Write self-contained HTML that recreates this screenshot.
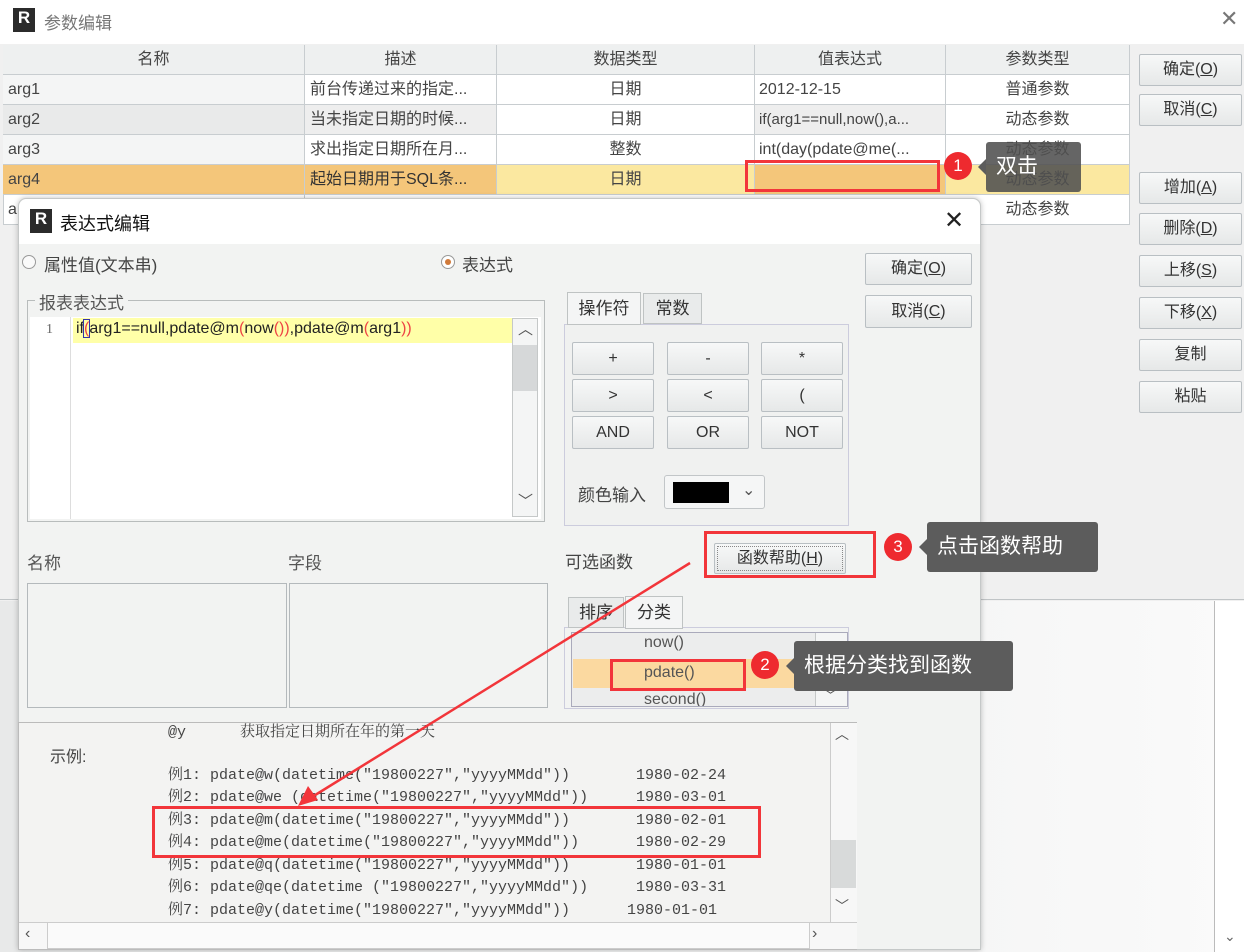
<!DOCTYPE html>
<html><head><meta charset="utf-8">
<style>
*{box-sizing:border-box;margin:0;padding:0}
body{width:1244px;height:952px;position:relative;overflow:hidden;background:#f0f0f0;font-family:"Liberation Sans","Noto Sans CJK SC",sans-serif;font-size:16px;color:#333}
.a{position:absolute}
.btn{position:absolute;background:linear-gradient(#f7f8f8,#e6e8e8);border:1px solid #b9bfc3;border-radius:2px;text-align:center;color:#333;font-size:16px}
.cell{position:absolute;border-right:1px solid #c8cdd0;border-bottom:1px solid #c8cdd0;height:30px;line-height:29px;font-size:16px;color:#444;white-space:nowrap;overflow:hidden}
.rb{position:absolute;border:3px solid #f2353a}
.badge{position:absolute;width:28px;height:28px;border-radius:50%;background:#ee2a2f;color:#fff;text-align:center;line-height:28px;font-size:17px}
.tip{position:absolute;background:#5c5c5c;color:#fff;font-size:21px;border-radius:3px;padding-left:10px}
.tip:before{content:"";position:absolute;left:-8px;top:50%;margin-top:-8px;border:8px solid transparent;border-left:0;border-right-color:#5c5c5c}
.mono{position:absolute;font-family:"Liberation Mono","Noto Serif CJK SC",monospace;font-size:15px;line-height:20px;height:20px;color:#444;white-space:pre}
</style></head><body>
<div class="a" style="left:0;top:0;width:1244px;height:44px;background:#fff"></div>
<div class="a" style="left:13px;top:8px;width:22px;height:24px;background:#2b2b2b;color:#fff;font-weight:bold;font-size:17px;text-align:center;line-height:20px">R</div>
<div class="a" style="left:44px;top:9px;font-size:17px;color:#777">参数编辑</div>
<div class="a" style="left:1220px;top:6px;font-size:22px;color:#777">✕</div>
<div class="a" style="left:0;top:44px;width:1244px;height:556px;background:#f0f0f0;border-bottom:1px solid #c0c4c6"></div>
<div class="a" style="left:0;top:601px;width:1244px;height:351px;background:linear-gradient(90deg,#e8e9e9,#fafafa)"></div>
<div class="a" style="left:1214px;top:601px;width:30px;height:351px;background:#fff;border-left:1px solid #bbb"></div>
<div class="a" style="left:1224px;top:928px;font-size:14px;color:#666">⌄</div>
<div class="a" style="left:3px;top:45px;width:1127px;height:180px;background:#fff;border:1px solid #c8cdd0"></div>
<div class="cell" style="left:3px;top:45px;width:302px;text-align:center;background:#eef0f0">名称</div>
<div class="cell" style="left:305px;top:45px;width:192px;text-align:center;background:#eef0f0">描述</div>
<div class="cell" style="left:497px;top:45px;width:258px;text-align:center;background:#eef0f0">数据类型</div>
<div class="cell" style="left:755px;top:45px;width:191px;text-align:center;background:#eef0f0">值表达式</div>
<div class="cell" style="left:946px;top:45px;width:184px;text-align:center;background:#eef0f0">参数类型</div>
<div class="cell" style="left:3px;top:75px;width:302px;padding-left:5px;background:#f4f5f5">arg1</div>
<div class="cell" style="left:305px;top:75px;width:192px;padding-left:5px">前台传递过来的指定...</div>
<div class="cell" style="left:497px;top:75px;width:258px;text-align:center">日期</div>
<div class="cell" style="left:755px;top:75px;width:191px;padding-left:4px">2012-12-15</div>
<div class="cell" style="left:946px;top:75px;width:184px;text-align:center">普通参数</div>
<div class="cell" style="left:3px;top:105px;width:302px;padding-left:5px;background:#e9eaea">arg2</div>
<div class="cell" style="left:305px;top:105px;width:192px;padding-left:5px;background:#eee">当未指定日期的时候...</div>
<div class="cell" style="left:497px;top:105px;width:258px;text-align:center">日期</div>
<div class="cell" style="left:755px;top:105px;width:191px;padding-left:4px;background:#eee;font-size:15px">if(arg1==null,now(),a...</div>
<div class="cell" style="left:946px;top:105px;width:184px;text-align:center">动态参数</div>
<div class="cell" style="left:3px;top:135px;width:302px;padding-left:5px;background:#f4f5f5">arg3</div>
<div class="cell" style="left:305px;top:135px;width:192px;padding-left:5px">求出指定日期所在月...</div>
<div class="cell" style="left:497px;top:135px;width:258px;text-align:center">整数</div>
<div class="cell" style="left:755px;top:135px;width:191px;padding-left:4px">int(day(pdate@me(...</div>
<div class="cell" style="left:946px;top:135px;width:184px;text-align:center">动态参数</div>
<div class="cell" style="left:3px;top:165px;width:302px;padding-left:5px;background:#f4c67a">arg4</div>
<div class="cell" style="left:305px;top:165px;width:192px;padding-left:5px;background:#f4c67a;color:#333">起始日期用于SQL条...</div>
<div class="cell" style="left:497px;top:165px;width:258px;text-align:center;background:#fbe8a0">日期</div>
<div class="cell" style="left:755px;top:165px;width:191px;background:#f4c67a"></div>
<div class="cell" style="left:946px;top:165px;width:184px;text-align:center;background:#fbe8a0">动态参数</div>
<div class="cell" style="left:3px;top:195px;width:302px;padding-left:5px">a</div>
<div class="cell" style="left:946px;top:195px;width:184px;text-align:center">动态参数</div>
<div class="btn" style="left:1139px;top:54px;width:103px;height:32px;line-height:30px">确定(<u>O</u>)</div>
<div class="btn" style="left:1139px;top:94px;width:103px;height:32px;line-height:30px">取消(<u>C</u>)</div>
<div class="btn" style="left:1139px;top:172px;width:103px;height:32px;line-height:30px">增加(<u>A</u>)</div>
<div class="btn" style="left:1139px;top:213px;width:103px;height:32px;line-height:30px">删除(<u>D</u>)</div>
<div class="btn" style="left:1139px;top:255px;width:103px;height:32px;line-height:30px">上移(<u>S</u>)</div>
<div class="btn" style="left:1139px;top:297px;width:103px;height:32px;line-height:30px">下移(<u>X</u>)</div>
<div class="btn" style="left:1139px;top:339px;width:103px;height:32px;line-height:30px">复制</div>
<div class="btn" style="left:1139px;top:381px;width:103px;height:32px;line-height:30px">粘贴</div>
<div class="rb" style="left:745px;top:160px;width:195px;height:32px"></div>
<div class="badge" style="left:944px;top:152px">1</div>
<div class="tip" style="left:986px;top:142px;width:95px;height:50px;line-height:50px;background:rgba(80,80,80,.88)">双击</div>

<div class="a" style="left:18px;top:198px;width:963px;height:752px;background:#f2f3f2;border:1px solid #c5c8c8;border-radius:8px 8px 0 0;box-shadow:0 0 6px rgba(0,0,0,.25)"></div>
<div class="a" style="left:19px;top:199px;width:961px;height:45px;background:#fff;border-radius:8px 8px 0 0"></div>
<div class="a" style="left:30px;top:209px;width:22px;height:24px;background:#2b2b2b;color:#fff;font-weight:bold;font-size:17px;text-align:center;line-height:20px">R</div>
<div class="a" style="left:60px;top:210px;font-size:18px;color:#111">表达式编辑</div>
<div class="a" style="left:944px;top:206px;font-size:24px;color:#222">✕</div>
<div class="a" style="left:22px;top:255px;width:14px;height:14px;border:1px solid #999;border-radius:50%;background:#fafafa"></div>
<div class="a" style="left:44px;top:251px;font-size:17px;color:#444">属性值(文本串)</div>
<div class="a" style="left:441px;top:255px;width:14px;height:14px;border:1px solid #999;border-radius:50%;background:#fff"><div style="margin:3px;width:6px;height:6px;border-radius:50%;background:#d07a3a"></div></div>
<div class="a" style="left:462px;top:251px;font-size:17px;color:#444">表达式</div>
<div class="btn" style="left:865px;top:253px;width:107px;height:32px;line-height:30px">确定(<u>O</u>)</div>
<div class="btn" style="left:865px;top:295px;width:107px;height:33px;line-height:31px">取消(<u>C</u>)</div>
<div class="a" style="left:27px;top:300px;width:518px;height:222px;border:1px solid #b8bcbc"></div>
<div class="a" style="left:35px;top:289px;background:#f2f3f2;padding:0 4px;font-size:17px;color:#555">报表表达式</div>
<div class="a" style="left:30px;top:317px;width:511px;height:202px;background:#fff"></div>
<div class="a" style="left:70px;top:317px;width:1px;height:202px;background:#ddd"></div>
<div class="a" style="left:46px;top:322px;font-size:14px;color:#666;font-family:'Liberation Serif',serif">1</div>
<div class="a" style="left:73px;top:318px;width:439px;height:25px;background:#ffffa8"></div>
<div class="a" style="left:76px;top:320px;font-size:16px;color:#222;white-space:pre">if<span style="color:#e44;outline:1px solid #33a">(</span>arg1==null,pdate@m<span style="color:#e44">(</span>now<span style="color:#e44">())</span>,pdate@m<span style="color:#e44">(</span>arg1<span style="color:#e44">))</span></div>
<div class="a" style="left:512px;top:318px;width:26px;height:199px;background:#f4f5f5;border:1px solid #c5c8c8"></div>
<div class="a" style="left:513px;top:345px;width:24px;height:46px;background:#d6d8d9"></div>
<div class="a" style="left:518px;top:318px;font-size:15px;color:#555">︿</div>
<div class="a" style="left:518px;top:490px;font-size:15px;color:#555">﹀</div>
<div class="a" style="left:564px;top:324px;width:285px;height:202px;border:1px solid #ccd;background:#f0f1f0"></div>
<div class="a" style="left:567px;top:292px;width:74px;height:33px;border:1px solid #bfc3c3;background:#f4f5f5;font-size:17px;text-align:center;line-height:31px;color:#333">操作符</div>
<div class="a" style="left:643px;top:293px;width:59px;height:31px;border:1px solid #bfc3c3;background:#e9ebeb;font-size:17px;text-align:center;line-height:29px;color:#333">常数</div>
<div class="btn" style="left:572px;top:342px;width:82px;height:33px;line-height:31px">+</div>
<div class="btn" style="left:667px;top:342px;width:82px;height:33px;line-height:31px">-</div>
<div class="btn" style="left:761px;top:342px;width:82px;height:33px;line-height:31px">*</div>
<div class="btn" style="left:572px;top:379px;width:82px;height:33px;line-height:31px">&gt;</div>
<div class="btn" style="left:667px;top:379px;width:82px;height:33px;line-height:31px">&lt;</div>
<div class="btn" style="left:761px;top:379px;width:82px;height:33px;line-height:31px">(</div>
<div class="btn" style="left:572px;top:416px;width:82px;height:33px;line-height:31px">AND</div>
<div class="btn" style="left:667px;top:416px;width:82px;height:33px;line-height:31px">OR</div>
<div class="btn" style="left:761px;top:416px;width:82px;height:33px;line-height:31px">NOT</div>
<div class="a" style="left:578px;top:481px;font-size:17px;color:#444">颜色输入</div>
<div class="a" style="left:664px;top:475px;width:101px;height:34px;border:1px solid #c2c6c8;border-radius:3px;background:#f5f6f6"></div>
<div class="a" style="left:673px;top:482px;width:56px;height:21px;background:#000"></div>
<div class="a" style="left:742px;top:480px;font-size:16px;color:#555">⌄</div>
<div class="a" style="left:565px;top:548px;font-size:17px;color:#444">可选函数</div>
<div class="btn" style="left:714px;top:543px;width:132px;height:31px;line-height:29px;outline:1px dotted #888;outline-offset:-4px">函数帮助(<u>H</u>)</div>
<div class="rb" style="left:704px;top:531px;width:172px;height:47px"></div>
<div class="badge" style="left:884px;top:533px">3</div>
<div class="tip" style="left:927px;top:522px;width:171px;height:50px;line-height:50px">点击函数帮助</div>
<div class="a" style="left:27px;top:549px;font-size:17px;color:#555">名称</div>
<div class="a" style="left:288px;top:549px;font-size:17px;color:#555">字段</div>
<div class="a" style="left:27px;top:583px;width:260px;height:125px;border:1px solid #b4b9bc"></div>
<div class="a" style="left:289px;top:583px;width:259px;height:125px;border:1px solid #b4b9bc"></div>
<div class="a" style="left:564px;top:627px;width:285px;height:82px;border:1px solid #ccd"></div>
<div class="a" style="left:568px;top:597px;width:56px;height:31px;border:1px solid #bfc3c3;background:#e9ebeb;font-size:17px;text-align:center;line-height:29px">排序</div>
<div class="a" style="left:625px;top:596px;width:58px;height:33px;border:1px solid #bfc3c3;background:#f4f5f5;font-size:17px;text-align:center;line-height:31px">分类</div>
<div class="a" style="left:571px;top:632px;width:277px;height:75px;border:1px solid #aab;background:#eceded;overflow:hidden">
 <div class="a" style="left:72px;top:1px;font-size:16px;color:#555">now()</div>
 <div class="a" style="left:1px;top:26px;width:245px;height:29px;background:#fbd9a0"></div>
 <div class="a" style="left:72px;top:31px;font-size:16px;color:#555">pdate()</div>
 <div class="a" style="left:72px;top:58px;font-size:16px;color:#555">second()</div>
 <div class="a" style="left:243px;top:0;width:32px;height:74px;border-left:1px solid #c5c8c8;background:#f4f5f5"></div>
 <div class="a" style="left:252px;top:2px;font-size:13px;color:#555">︿</div>
 <div class="a" style="left:252px;top:52px;font-size:13px;color:#555">﹀</div>
</div>
<div class="rb" style="left:610px;top:659px;width:136px;height:32px"></div>
<div class="badge" style="left:751px;top:651px">2</div>
<div class="tip" style="left:794px;top:641px;width:219px;height:50px;line-height:50px">根据分类找到函数</div>
<div class="a" style="left:18px;top:722px;width:839px;height:228px;background:#f3f3f2;border:1px solid #bbb"></div>
<div class="a" style="left:830px;top:723px;width:27px;height:199px;background:#f7f7f7;border-left:1px solid #ccc"></div>
<div class="a" style="left:831px;top:840px;width:25px;height:48px;background:#d8dada"></div>
<div class="a" style="left:835px;top:724px;font-size:14px;color:#555">︿</div>
<div class="a" style="left:835px;top:896px;font-size:14px;color:#555">﹀</div>
<div class="a" style="left:19px;top:922px;width:838px;height:27px;background:#f7f7f7;border-top:1px solid #ccc"></div>
<div class="a" style="left:47px;top:922px;width:763px;height:27px;border:1px solid #ccc;background:#fafafa"></div>
<div class="a" style="left:25px;top:925px;font-size:16px;color:#555">‹</div>
<div class="a" style="left:812px;top:925px;font-size:16px;color:#555">›</div>
<div class="mono" style="left:168px;top:723px">@y      获取指定日期所在年的第一天</div>
<div class="a" style="left:50px;top:743px;font-size:16px;color:#444">示例:</div>
<div class="mono" style="left:168px;top:766px">例1: pdate@w(datetime("19800227","yyyyMMdd"))</div><div class="mono" style="left:636px;top:766px">1980-02-24</div>
<div class="mono" style="left:168px;top:788px">例2: pdate@we (datetime("19800227","yyyyMMdd"))</div><div class="mono" style="left:636px;top:788px">1980-03-01</div>
<div class="mono" style="left:168px;top:811px">例3: pdate@m(datetime("19800227","yyyyMMdd"))</div><div class="mono" style="left:636px;top:811px">1980-02-01</div>
<div class="mono" style="left:168px;top:833px">例4: pdate@me(datetime("19800227","yyyyMMdd"))</div><div class="mono" style="left:636px;top:833px">1980-02-29</div>
<div class="mono" style="left:168px;top:856px">例5: pdate@q(datetime("19800227","yyyyMMdd"))</div><div class="mono" style="left:636px;top:856px">1980-01-01</div>
<div class="mono" style="left:168px;top:878px">例6: pdate@qe(datetime ("19800227","yyyyMMdd"))</div><div class="mono" style="left:636px;top:878px">1980-03-31</div>
<div class="mono" style="left:168px;top:901px">例7: pdate@y(datetime("19800227","yyyyMMdd"))</div><div class="mono" style="left:627px;top:901px">1980-01-01</div>
<div class="rb" style="left:152px;top:806px;width:609px;height:52px"></div>
<svg class="a" style="left:0;top:0" width="1244" height="952">
<line x1="690" y1="563" x2="312" y2="797" stroke="#f2353a" stroke-width="2.5"/>
<polygon points="298,806 308,786 318,800" fill="#f2353a"/>
</svg>
</body></html>
